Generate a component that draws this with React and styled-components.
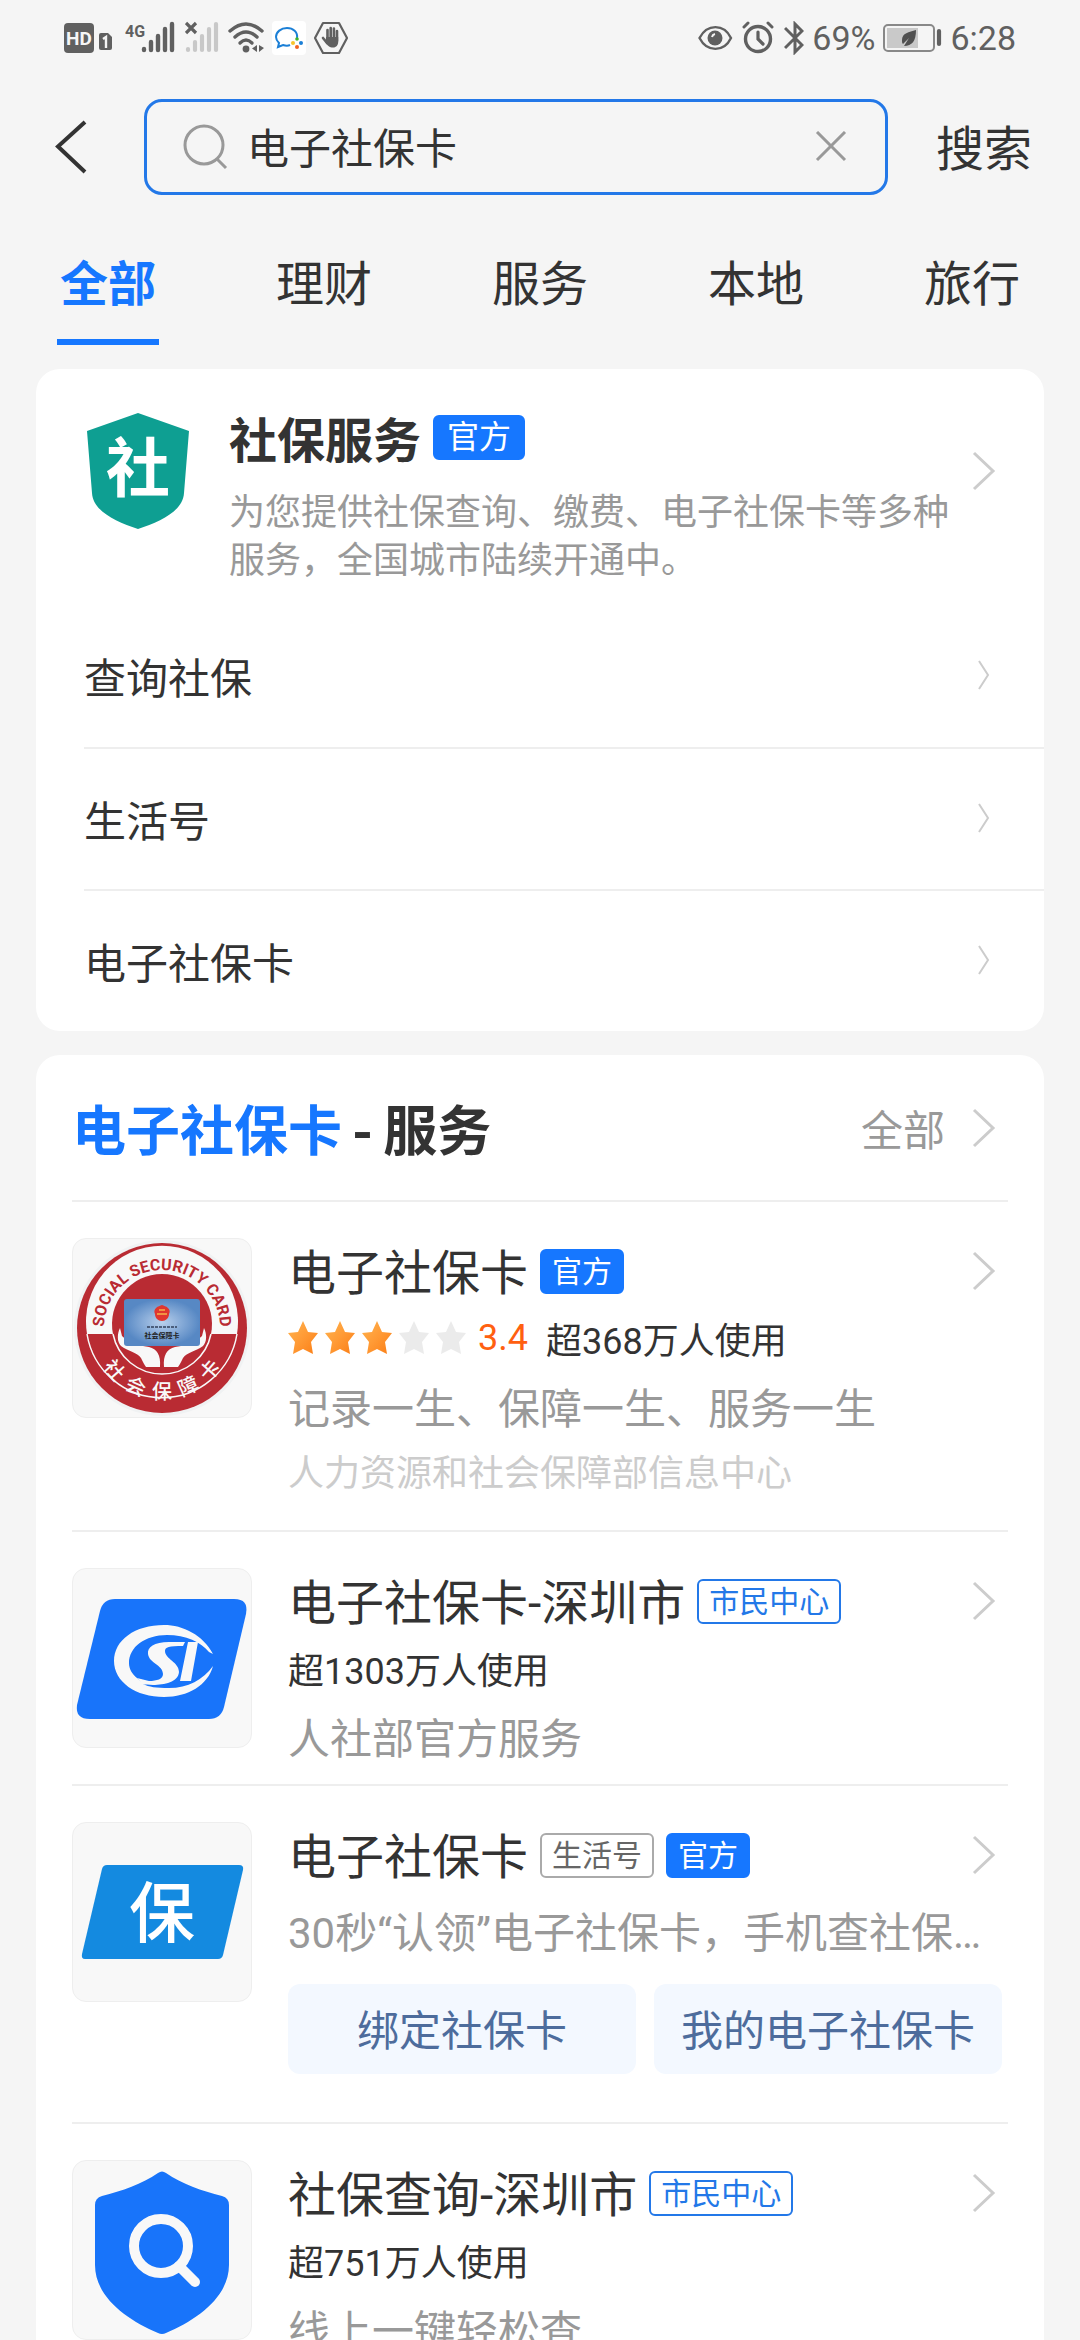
import styled, { createGlobalStyle, css } from "styled-components";

const GlobalStyles = createGlobalStyle`
  * {
    box-sizing: border-box;
    margin: 0;
    padding: 0;
  }

  body {
    background-color: #f5f5f5;
    color: #333;
    font-family: Roboto, "Noto Sans CJK SC", sans-serif;
    font-size: 42px;
  }

  button, input {
    font: inherit;
    color: inherit;
    border: none;
    background: none;
  }

  a {
    color: inherit;
    text-decoration: none;
  }

  svg {
    display: block;
    flex-shrink: 0;
  }
`;

const Screen = styled.div`
  height: 100vh;
  overflow-y: auto;
  scrollbar-width: none;
`;

const StatusBar = styled.div`
  display: flex;
  justify-content: space-between;
  align-items: center;
  height: 76px;
  padding: 0 64px;
  color: #606060;
  font-size: 34px;
`;

const StatusGroup = styled.div`
  display: flex;
  align-items: center;
  gap: 8px;
`;

const SearchBar = styled.form`
  display: flex;
  align-items: center;
  height: 142px;
  padding: 0 48px;
`;

const BackButton = styled.button`
  width: 96px;
  height: 96px;
`;

const SearchBox = styled.div`
  flex: 1;
  display: flex;
  align-items: center;
  gap: 18px;
  height: 96px;
  padding: 0 38px 0 36px;
  border: 3px solid #2378e8;
  border-radius: 18px;
`;

const SearchInput = styled.input`
  flex: 1;
  min-width: 0;
  padding-bottom: 4px;
  outline: none;
`;

const SearchButton = styled.button`
  margin-left: 48px;
  padding-bottom: 4px;
  font-size: 48px;
`;

const Tabs = styled.nav`
  display: grid;
  grid-template-columns: repeat(5, 1fr);
  justify-items: center;
  padding-top: 18px;
`;

const Tab = styled.button`
  width: 102px;
  height: 109px;
  padding-bottom: 16px;
  font-size: 48px;
  white-space: nowrap;
  border-bottom: 6px solid transparent;

  ${(props) =>
    props.$active &&
    css`
      color: #1677ff;
      font-weight: 700;
      border-color: #1677ff;
    `}
`;

const Card = styled.section`
  margin: 24px 36px 0;
  background-color: #fff;
  border-radius: 24px;
`;

const Intro = styled.a`
  display: flex;
  align-items: center;
  height: 236px;
  padding: 0 48px 32px 50px;
`;

const IntroText = styled.div`
  flex: 1;
  align-self: flex-start;
  margin: 36px 18px 0 39px;
`;

const IntroIcon = styled.div`
  align-self: flex-start;
  margin-top: 43px;
`;

const IntroTitle = styled.h2`
  display: flex;
  align-items: center;
  gap: 12px;
  height: 64px;
  margin-bottom: 20px;
  font-size: 48px;
`;

const IntroDescription = styled.p`
  color: #999;
  font-size: 36px;
  line-height: 48px;
`;

const tagColors = {
  solid: css`
    background-color: #1677ff;
    border-color: #1677ff;
    color: #fff;
  `,
  outline: css`
    border-color: #2378e8;
    color: #2378e8;
  `,
  grey: css`
    border-color: #aaa;
    color: #666;
  `,
};

const Tag = styled.span`
  height: 45px;
  padding: 0 10px;
  border: 2px solid;
  border-radius: 6px;
  font-size: 30px;
  font-weight: 400;
  line-height: 41px;
  ${(props) => tagColors[props.$type]}

  ${(props) =>
    props.$large &&
    css`
      padding: 0 12px;
      font-size: 32px;
    `}
`;

const LinkRow = styled.a`
  display: flex;
  justify-content: space-between;
  align-items: center;
  height: 142px;
  margin-left: 48px;
  padding: 0 54px 2px 0;

  & + & {
    border-top: 2px solid #eee;
  }
`;

const Header = styled.header`
  display: flex;
  justify-content: space-between;
  align-items: center;
  height: 145px;
  margin: 0 36px;
  padding-right: 12px;
`;

const HeaderTitle = styled.h2`
  display: flex;
  align-items: baseline;
  gap: 10px;
  font-size: 54px;

  em {
    color: #1677ff;
    font-style: normal;
  }
`;

const MoreLink = styled.a`
  display: flex;
  align-items: center;
  gap: 27px;
  color: #999;
`;

const Item = styled.article`
  display: flex;
  gap: 36px;
  margin: 0 36px;
  padding: 36px 0 2px;
  border-top: 2px solid #eee;
`;

const ItemIcon = styled.div`
  flex-shrink: 0;
  width: 180px;
  height: 180px;
  border: 1px solid #eee;
  border-radius: 14px;
  background-color: #f8f8f8;
  overflow: hidden;
`;

const ItemBody = styled.div`
  flex: 1;
  min-width: 0;
`;

const ItemTitle = styled.a`
  display: flex;
  align-items: center;
  gap: 12px;
  height: 66px;
  margin-bottom: 4px;
  padding-right: 12px;

  svg {
    margin-left: auto;
  }
`;

const ItemName = styled.h3`
  padding-bottom: 4px;
  font-size: 48px;
  font-weight: 400;
`;

const Usage = styled.p`
  display: flex;
  align-items: center;
  height: 60px;
  font-size: 36px;
`;

const Stars = styled.span`
  display: flex;
  gap: 7px;
`;

const Score = styled.span`
  margin: 0 18px 0 12px;
  color: #ff6010;
`;

const Description = styled.p`
  color: #999;
  line-height: 84px;
  overflow: hidden;
  white-space: nowrap;
`;

const Publisher = styled.p`
  margin-bottom: 32px;
  color: #ccc;
  font-size: 36px;
  line-height: 44px;
`;

const Actions = styled.div`
  display: grid;
  grid-template-columns: 1fr 1fr;
  gap: 18px;
  margin: 8px 6px 46px 0;
`;

const ActionButton = styled.button`
  height: 90px;
  padding-bottom: 4px;
  border-radius: 12px;
  background-color: #f3f8ff;
  color: #4d6c9c;
`;

function Chevron() {
  return (
    <svg width="24" height="40" viewBox="0 0 24 40" fill="none">
      <path d="M2 2 21 20 2 38" stroke="#ccc" strokeWidth="3" />
    </svg>
  );
}

function SmallChevron() {
  return (
    <svg width="12" height="30" viewBox="0 0 12 30" fill="none">
      <path d="M1 1 10 15 1 29" stroke="#ccc" strokeWidth="2" />
    </svg>
  );
}

function SimIcon() {
  return (
    <svg width="52" height="34" viewBox="0 0 52 34">
      <rect x="0" y="2" width="30" height="30" rx="4" fill="#606060" />
      <text
        x="15"
        y="24"
        textAnchor="middle"
        fontSize="19"
        fontWeight="700"
        fill="#f5f5f5"
      >
        HD
      </text>
      <path d="M37 12h7l4 4v11a2 2 0 0 1-2 2h-9a2 2 0 0 1-2-2V14a2 2 0 0 1 2-2z" fill="#606060" />
      <path d="M39 18l3-2v11" stroke="#f5f5f5" strokeWidth="2.4" fill="none" />
    </svg>
  );
}

const bars = [
  { x: 20, y: 28 },
  { x: 27, y: 21 },
  { x: 34, y: 15 },
  { x: 41, y: 8 },
  { x: 48, y: 3 },
];

function SignalIcon() {
  return (
    <svg width="53" height="34" viewBox="0 0 53 34">
      <text x="1" y="16" fontSize="16" fontWeight="700" fill="#606060">
        4G
      </text>
      {bars.map((bar) => (
        <path key={bar.x} d={`M${bar.x} ${bar.y}V29`} stroke="#606060" strokeWidth="4.4" strokeLinecap="round" />
      ))}
    </svg>
  );
}

function NoSignalIcon() {
  return (
    <svg width="35" height="34" viewBox="15 0 35 34">
      {bars.map((bar) => (
        <path key={bar.x} d={`M${bar.x - 2} ${bar.y}V29`} stroke="#c8c8c8" strokeWidth="4.2" strokeLinecap="round" />
      ))}
      <path d="M16 2l10 10M26 2l-10 10" stroke="#606060" strokeWidth="3.2" />
    </svg>
  );
}

function WifiIcon() {
  return (
    <svg width="36" height="34" viewBox="0 0 36 34" fill="none">
      <g stroke="#606060" strokeWidth="3.4" strokeLinecap="round">
        <path d="M2 10Q18-4 34 10" />
        <path d="M7 16Q18 6 29 16" />
        <path d="M12 22Q18 16 24 22" />
      </g>
      <circle cx="18" cy="28" r="3.4" fill="#606060" />
      <path d="M29 24v7l-5-3.5zM31 24v7l5-4z" fill="#606060" />
    </svg>
  );
}

function ChatIcon() {
  return (
    <svg width="34" height="34" viewBox="0 0 34 34" fill="none">
      <rect width="34" height="34" rx="4" fill="#fff" />
      <path
        d="M25 17c1-6-4-10-10-10S4 11 4 16c0 3 1 4 3 6l-1 4 5-2c3 1 5 1 7 0"
        stroke="#1b7fd6"
        strokeWidth="2"
      />
      <circle cx="25" cy="18" r="1.8" fill="#3fb52a" />
      <circle cx="21" cy="22" r="2" fill="#f7c52c" />
      <circle cx="29" cy="22" r="2" fill="#1b7fd6" />
      <circle cx="25" cy="26" r="2" fill="#f06322" />
    </svg>
  );
}

function HandIcon() {
  return (
    <svg width="34" height="34" viewBox="0 0 34 34" fill="none">
      <path d="M9 2h16l8 15-8 15H9L1 17z" stroke="#606060" strokeWidth="2.2" strokeLinejoin="round" />
      <path
        d="M13.5 9v10M16.7 7v10M19.9 7.5v10M23 10v10M9 17l4 5"
        stroke="#606060"
        strokeWidth="2.6"
        strokeLinecap="round"
      />
      <path d="M12.2 16h12v5c0 3-2 5.5-5 5.5-4 0-6-2-8-5.5z" fill="#606060" />
    </svg>
  );
}

function EyeIcon() {
  return (
    <svg width="36" height="34" viewBox="0 0 36 34" fill="none">
      <path d="M1.5 17C9 2.5 26 2.5 33 17 26 31.5 9 31.5 1.5 17z" stroke="#606060" strokeWidth="2.4" />
      <circle cx="17" cy="17" r="7.5" fill="#606060" />
      <path d="M14 16a4 4 0 0 1 3-3" stroke="#f5f5f5" strokeWidth="2" />
    </svg>
  );
}

function AlarmIcon() {
  return (
    <svg width="34" height="34" viewBox="0 0 34 34" fill="none" stroke="#606060" strokeLinecap="round">
      <circle cx="16" cy="18" r="12.5" strokeWidth="3.4" />
      <path d="M16 11v7l5 5" strokeWidth="3.2" />
      <path d="M2 6l4-4M30 6l-4-4" strokeWidth="3" />
    </svg>
  );
}

function BluetoothIcon() {
  return (
    <svg width="20" height="34" viewBox="0 0 20 34" fill="none">
      <path d="M1 7l17 17-7 7V3l7 7L1 27" stroke="#606060" strokeWidth="3" />
    </svg>
  );
}

function BatteryIcon() {
  return (
    <svg width="59" height="34" viewBox="0 0 59 34" fill="none">
      <rect x="1" y="4" width="50" height="26" rx="4" stroke="#888" strokeWidth="2" />
      <rect x="4" y="7" width="31" height="20" fill="#c9c9c9" />
      <path d="M33 9c-7 2-14 3-14 10 0 2 0 3 1 4l6-6-5 8c8 0 12-5 12-16z" fill="#505050" />
      <path d="M56 10v13" stroke="#606060" strokeWidth="4.2" strokeLinecap="round" />
    </svg>
  );
}

function BackIcon() {
  return (
    <svg width="40" height="56" viewBox="0 0 40 56" fill="none">
      <path d="M37 3 10 27.5 37 53" stroke="#333" strokeWidth="4" />
    </svg>
  );
}

function SearchIcon() {
  return (
    <svg width="46" height="46" viewBox="0 0 46 46" fill="none" stroke="#999" strokeWidth="3">
      <circle cx="21" cy="21" r="19" />
      <path d="M34 35l9 9" />
    </svg>
  );
}

function ClearIcon() {
  return (
    <svg width="32" height="32" viewBox="0 0 32 32" fill="none">
      <path d="M2 1l28 28M30 1L2 29" stroke="#999" strokeWidth="3" />
    </svg>
  );
}

function Star({ filled }) {
  return (
    <svg width="30" height="34" viewBox="0 0 30 34">
      <defs>
        <linearGradient id="starFill" x1="0" y1="0" x2="1" y2="1">
          <stop offset="0" stopColor="#ffb550" />
          <stop offset="0.5" stopColor="#ff9a35" />
          <stop offset="1" stopColor="#fb7d14" />
        </linearGradient>
      </defs>
      <path
        d="M15 0l5 11 10 1-7 9 2 12-10-5-10 5 2-12-7-9 10-1z"
        fill={filled ? "url(#starFill)" : "#ebebeb"}
      />
    </svg>
  );
}

function ShieldLogo() {
  return (
    <svg width="104" height="118" viewBox="0 0 104 118">
      <path d="M52 1l51 18-5 62c-1 18-24 29-46 36C30 110 7 99 6 81L1 19z" fill="#0e9f92" />
      <text x="52" y="79" textAnchor="middle" fontSize="64" fontWeight="700" fill="#fff">
        社
      </text>
    </svg>
  );
}

function SocialCardLogo() {
  return (
    <svg width="178" height="178" viewBox="1 1 178 178">
      <defs>
        <path id="sealTop" d="M32 96L32 90A58 58 0 0 1 148 90L148 96" />
        <path id="sealBottom" d="M19 90A71 71 0 0 0 161 90" />
        <radialGradient id="cardFill">
          <stop offset="0" stopColor="#b9d0ec" />
          <stop offset="1" stopColor="#5788c4" />
        </radialGradient>
      </defs>
      <circle cx="90" cy="90" r="88" fill="#f0f2f3" />
      <circle cx="90" cy="90" r="85" fill="#b92b33" />
      <path d="M15 96A76 76 0 1 1 165 96z" fill="#f8f8f8" />
      <path d="M41 96A50 50 0 1 1 139 96z" fill="#b92b33" />
      <path d="M15 96A76 76 0 0 0 165 96" fill="none" stroke="#f8f8f8" strokeWidth="1.5" />
      <path d="M41 96A50 50 0 0 0 139 96" fill="none" stroke="#f8f8f8" strokeWidth="1.5" />
      <path
        d="M48 90c-3 6-3 14 1 18 8 6 16 6 20 12 2 4 3 6 5 9h14c1-12-3-18-11-20l-18-3-9-8zM132 90c3 6 3 14-1 18-8 6-16 6-20 12-2 4-3 6-5 9H92c-1-12 3-18 11-20l18-3 9-8z"
        fill="#f8f8f8"
      />
      <rect x="52" y="61" width="76" height="47" rx="3" fill="url(#cardFill)" />
      <path d="M90 67c2 1 4 1 6 3 2 2 2 4 1 6 0 4-3 7-7 7s-7-3-7-7c-1-2-1-4 1-6 2-2 4-2 6-3z" fill="#e0362f" />
      <path d="M85 76h10M87 72h6" stroke="#f6b24a" strokeWidth="1.5" />
      <path d="M75 89h30" stroke="#33415c" strokeWidth="1.5" strokeDasharray="3 1" />
      <text x="90" y="100" textAnchor="middle" fontSize="7" fontWeight="700" fill="#222">
        社会保障卡
      </text>
      <text fontSize="16" fontWeight="700" fill="#b92b33">
        <textPath href="#sealTop" startOffset="50%" textAnchor="middle">
          SOCIAL SECURITY CARD
        </textPath>
      </text>
      <text fontSize="20" fontWeight="500" fill="#f8f8f8">
        <textPath href="#sealBottom" startOffset="50%" textAnchor="middle">
          {["社", "会", "保", "障", "卡"].join("\u00a0\u00a0")}
        </textPath>
      </text>
    </svg>
  );
}

function CityCardLogo() {
  return (
    <svg width="178" height="178" viewBox="1 1 178 178">
      <path
        d="M43 31H162Q177 31 174 46L152 139Q149 151 137 151H18Q3 151 5 137L28 43Q31 31 43 31z"
        fill="#1874fa"
      />
      <path
        d="M141 86C131 67 111 57 92 57 63 57 42 72 42 93s22 36 50 36c24 0 44-12 49-31-10 14-25 22-44 22-13 0-20-1-26-4l-6-6c-5-4-8-9-8-15 0-16 16-28 38-28 19 0 34 7 42 17z"
        fill="#f8f8f8"
      />
      <path
        d="M113 74H97c-15 0-22 5-21 12 1 9 15 11 15 20 0 5-6 7-14 7l-12-3 5 6c10 2 36 2 37-12 0-10-14-13-14-21 0-4 4-5 18-5zM116 74h10l-7 39h-11z"
        fill="#f8f8f8"
      />
    </svg>
  );
}

function InsuranceLogo() {
  return (
    <svg width="178" height="178" viewBox="1 1 178 178">
      <path d="M35 43H167Q172 43 171 48L151 133Q150 137 146 137H13Q9 137 10 132L30 47Q31 43 35 43z" fill="#148ae0" />
      <text x="90" y="115" textAnchor="middle" fontSize="66" fontWeight="500" fill="#fff">
        保
      </text>
    </svg>
  );
}

function QueryLogo() {
  return (
    <svg width="178" height="178" viewBox="1 1 178 178">
      <path
        d="M86 13Q90 10 94 13C110 24 130 31 150 36Q157 38 157 45V105C157 137 125 160 94 173Q90 175 86 173C55 160 23 137 23 105V45Q23 38 30 36C50 31 70 24 86 13z"
        fill="#1874fa"
      />
      <circle cx="89" cy="86" r="27" fill="none" stroke="#f8f8f8" strokeWidth="10" />
      <path d="M107 106l16 16" stroke="#f8f8f8" strokeWidth="10" strokeLinecap="round" />
    </svg>
  );
}

const tabs = ["全部", "理财", "服务", "本地", "旅行"];
const links = ["查询社保", "生活号", "电子社保卡"];

const services = [
  {
    name: "电子社保卡",
    logo: <SocialCardLogo />,
    tags: [{ text: "官方", type: "solid" }],
    stars: 3,
    score: "3.4",
    usage: "超368万人使用",
    description: "记录一生、保障一生、服务一生",
    publisher: "人力资源和社会保障部信息中心",
  },
  {
    name: "电子社保卡-深圳市",
    logo: <CityCardLogo />,
    tags: [{ text: "市民中心", type: "outline" }],
    usage: "超1303万人使用",
    description: "人社部官方服务",
  },
  {
    name: "电子社保卡",
    logo: <InsuranceLogo />,
    tags: [
      { text: "生活号", type: "grey" },
      { text: "官方", type: "solid" },
    ],
    description: "30秒“认领”电子社保卡，手机查社保…",
    actions: ["绑定社保卡", "我的电子社保卡"],
  },
  {
    name: "社保查询-深圳市",
    logo: <QueryLogo />,
    tags: [{ text: "市民中心", type: "outline" }],
    usage: "超751万人使用",
    description: "线上一键轻松查",
  },
];

function Service({ service }) {
  return (
    <Item>
      <ItemIcon>{service.logo}</ItemIcon>
      <ItemBody>
        <ItemTitle href="#">
          <ItemName>{service.name}</ItemName>
          {service.tags.map((tag) => (
            <Tag key={tag.text} $type={tag.type}>
              {tag.text}
            </Tag>
          ))}
          <Chevron />
        </ItemTitle>
        {service.usage && (
          <Usage>
            {service.score && (
              <>
                <Stars>
                  {[1, 2, 3, 4, 5].map((n) => (
                    <Star key={n} filled={n <= service.stars} />
                  ))}
                </Stars>
                <Score>{service.score}</Score>
              </>
            )}
            {service.usage}
          </Usage>
        )}
        <Description>{service.description}</Description>
        {service.publisher && <Publisher>{service.publisher}</Publisher>}
        {service.actions && (
          <Actions>
            {service.actions.map((action) => (
              <ActionButton key={action}>{action}</ActionButton>
            ))}
          </Actions>
        )}
      </ItemBody>
    </Item>
  );
}

function App() {
  return (
    <>
      <GlobalStyles />
      <Screen>
        <StatusBar>
          <StatusGroup>
            <SimIcon />
            <SignalIcon />
            <NoSignalIcon />
            <WifiIcon />
            <ChatIcon />
            <HandIcon />
          </StatusGroup>
          <StatusGroup>
            <EyeIcon />
            <AlarmIcon />
            <BluetoothIcon />
            <span>69%</span>
            <BatteryIcon />
            <span>6:28</span>
          </StatusGroup>
        </StatusBar>

        <SearchBar onSubmit={(e) => e.preventDefault()}>
          <BackButton type="button" aria-label="返回">
            <BackIcon />
          </BackButton>
          <SearchBox>
            <SearchIcon />
            <SearchInput aria-label="搜索" defaultValue="电子社保卡" />
            <button type="reset" aria-label="清除">
              <ClearIcon />
            </button>
          </SearchBox>
          <SearchButton type="submit">搜索</SearchButton>
        </SearchBar>

        <Tabs>
          {tabs.map((tab, i) => (
            <Tab key={tab} $active={i === 0}>
              {tab}
            </Tab>
          ))}
        </Tabs>

        <Card>
          <Intro href="#">
            <IntroIcon>
              <ShieldLogo />
            </IntroIcon>
            <IntroText>
              <IntroTitle>
                社保服务
                <Tag $type="solid" $large>
                  官方
                </Tag>
              </IntroTitle>
              <IntroDescription>
                为您提供社保查询、缴费、电子社保卡等多种服务，全国城市陆续开通中。
              </IntroDescription>
            </IntroText>
            <Chevron />
          </Intro>
          {links.map((link) => (
            <LinkRow key={link} href="#">
              {link}
              <SmallChevron />
            </LinkRow>
          ))}
        </Card>

        <Card>
          <Header>
            <HeaderTitle>
              <em>电子社保卡</em>
              <span>-</span>
              <span>服务</span>
            </HeaderTitle>
            <MoreLink href="#">
              全部
              <Chevron />
            </MoreLink>
          </Header>
          {services.map((service, i) => (
            <Service key={i} service={service} />
          ))}
        </Card>
      </Screen>
    </>
  );
}

export default App;
